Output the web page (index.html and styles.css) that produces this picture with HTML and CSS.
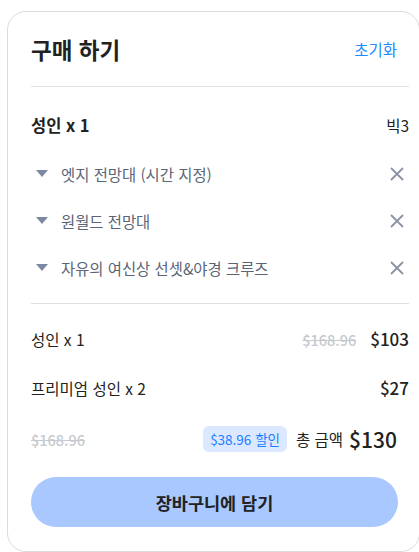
FILE: index.html
```html
<!DOCTYPE html>
<html lang="ko">
<head>
    <meta charset="UTF-8">
    <meta name="viewport" content="width=device-width, initial-scale=1.0">
    <link rel="stylesheet" href="styles.css">
</head>
<body>
    <div class="card">
        <div class="card-head">
            <h2 class="title">구매 하기</h2>
            <span class="reset">초기화</span>
        </div>

        <div class="ticket">
            <span class="ticket-name">성인 x 1</span>
            <span class="ticket-tag">빅3</span>
        </div>

        <ul class="spots">
            <li class="spot">
                <span class="caret"></span>
                <span class="spot-name">엣지 전망대 (시간 지정)</span>
                <svg class="remove" width="14" height="14" viewBox="0 0 14 14"><path d="M1 1L13 13M13 1L1 13" /></svg>
            </li>
            <li class="spot">
                <span class="caret"></span>
                <span class="spot-name">원월드 전망대</span>
                <svg class="remove" width="14" height="14" viewBox="0 0 14 14"><path d="M1 1L13 13M13 1L1 13" /></svg>
            </li>
            <li class="spot">
                <span class="caret"></span>
                <span class="spot-name">자유의 여신상 선셋&amp;야경 크루즈</span>
                <svg class="remove" width="14" height="14" viewBox="0 0 14 14"><path d="M1 1L13 13M13 1L1 13" /></svg>
            </li>
        </ul>

        <div class="summary">
            <div class="line">
                <span class="line-name">성인 x 1</span>
                <span class="old-price">$168.96</span>
                <span class="price">$103</span>
            </div>
            <div class="line line-2">
                <span class="line-name">프리미엄 성인 x 2</span>
                <span class="price">$27</span>
            </div>
            <div class="total">
                <span class="old-price">$168.96</span>
                <span class="discount">$38.96 할인</span>
                <span class="total-label">총 금액</span>
                <span class="total-price">$130</span>
            </div>
        </div>

        <button class="cart-btn">장바구니에 담기</button>
    </div>
</body>
</html>
```

FILE: styles.css
```css
html, body {
    margin: 0;
    background: #fff;
    overflow: hidden;
}

body {
    font-family: "Noto Sans CJK KR", "Noto Sans", sans-serif;
    color: #222;
}

.card {
    box-sizing: border-box;
    width: 413px;
    height: 541px;
    margin: 11px 0 0 7px;
    padding: 0 10px 0 23px;
    border: 1px solid #dcdcdc;
    border-radius: 19px;
}

.card-head {
    display: flex;
    align-items: center;
    justify-content: space-between;
    height: 74px;
    border-bottom: 1px solid #e0e0e0;
}

.title {
    margin: 0;
    font-size: 22.5px;
    font-weight: 700;
    color: #222;
}

.reset {
    margin-right: 12px;
    font-size: 15.5px;
    color: #1a8cff;
}

.ticket {
    display: flex;
    align-items: center;
    justify-content: space-between;
    height: 24px;
    margin-top: 26px;
}

.ticket-name {
    font-size: 16.5px;
    font-weight: 700;
}

.ticket-tag {
    font-size: 15.5px;
}

.spots {
    list-style: none;
    margin: 13px 0 0;
    padding: 0 0 12px;
    border-bottom: 1px solid #e0e0e0;
}

.spot {
    display: flex;
    align-items: center;
    height: 47px;
}

.caret {
    width: 0;
    height: 0;
    margin: 0 13px 0 5px;
    border-left: 6px solid transparent;
    border-right: 6px solid transparent;
    border-top: 7px solid #7b89a4;
}

.spot-name {
    flex: 1;
    font-size: 15.4px;
    color: #5b6475;
}

.remove {
    margin-right: 5px;
    stroke: #8b93a3;
    stroke-width: 1.8;
    fill: none;
}

.summary {
    padding-top: 22px;
}

.line {
    display: flex;
    align-items: baseline;
    height: 24px;
}

.line-2 {
    margin-top: 25px;
}

.line-name {
    flex: 1;
    font-size: 15.5px;
}

.old-price {
    font-size: 14.5px;
    font-weight: 500;
    color: #c5c9d0;
    text-decoration: line-through;
}

.line .old-price {
    margin-right: 14px;
}

.price {
    font-size: 17px;
    font-weight: 500;
}

.total {
    display: flex;
    align-items: center;
    height: 26px;
    margin-top: 27px;
    padding-right: 12px;
}

.total .old-price {
    flex: 1;
}

.discount {
    padding: 3px 7px;
    border-radius: 6px;
    background: #dbe8ff;
    color: #1a7fff;
    font-size: 13.5px;
}

.total-label {
    margin-left: 9px;
    font-size: 15.5px;
}

.total-price {
    margin-left: 6px;
    font-size: 21px;
    font-weight: 500;
}

.cart-btn {
    display: block;
    width: 367px;
    height: 50px;
    margin-top: 25px;
    border: none;
    border-radius: 25px;
    background: #a8c8ff;
    color: #222;
    font-family: inherit;
    font-size: 17.5px;
    font-weight: 700;
}
```
